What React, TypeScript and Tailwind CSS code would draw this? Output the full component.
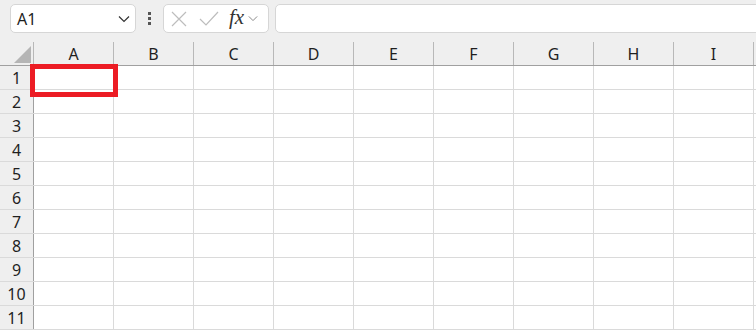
import React from 'react';

const columns = ['A', 'B', 'C', 'D', 'E', 'F', 'G', 'H', 'I'];
const rows = [1, 2, 3, 4, 5, 6, 7, 8, 9, 10, 11];

function Chevron({ className }: { className?: string }) {
  return (
    <svg viewBox="0 0 12 8" className={className} fill="none" stroke="currentColor" strokeWidth="1.2">
      <path d="M1 1.5 L6 6.5 L11 1.5" />
    </svg>
  );
}

export default function App() {
  return (
    <div
      className="w-[756px] h-[330px] overflow-hidden bg-[#efefef] text-[#1f1f1f]"
      style={{ fontFamily: '"Noto Sans", "Open Sans", sans-serif' }}
    >
      {/* formula bar row */}
      <div className="h-[42px] flex items-start pt-[4px]">
        <div className="ml-[10px] w-[126px] h-[29px] rounded-[5px] border border-[#d6d6d6] bg-white flex items-center justify-between pl-[6px] pr-[5px]">
          <span className="text-[16px] leading-none">A1</span>
          <Chevron className="w-[12px] h-[8px] text-[#333]" />
        </div>
        <div className="w-[27px] h-[29px] flex flex-col items-center justify-center gap-[2px]">
          <span className="w-[3px] h-[3px] bg-[#555]" />
          <span className="w-[3px] h-[3px] bg-[#555]" />
          <span className="w-[3px] h-[3px] bg-[#555]" />
        </div>
        <div className="w-[106px] h-[29px] rounded-[5px] border border-[#d6d6d6] bg-white flex items-center pl-[7px]">
          <svg viewBox="0 0 16 16" className="w-[16px] h-[16px] text-[#bdbdbd]" fill="none" stroke="currentColor" strokeWidth="1.2">
            <path d="M1 1 L15 15 M15 1 L1 15" />
          </svg>
          <svg viewBox="0 0 20 16" className="ml-[12px] w-[20px] h-[16px] text-[#bdbdbd]" fill="none" stroke="currentColor" strokeWidth="1.2">
            <path d="M1 8 L7 14 L19 1" />
          </svg>
          <span
            className="ml-[10px] text-[21px] leading-none italic font-medium text-[#333] -mt-[3px]"
            style={{ fontFamily: '"Liberation Serif", serif' }}
          >
            fx
          </span>
          <Chevron className="ml-[4px] w-[10px] h-[7px] text-[#8a8a8a]" />
        </div>
        <div className="ml-[6px] flex-1 -mr-[10px] h-[29px] rounded-[5px] border border-[#d6d6d6] bg-white" />
      </div>

      {/* sheet */}
      <div className="relative">
        <div className="flex h-[24px] border-b border-[#a0a0a0]">
          <div className="w-[34px] shrink-0 border-r border-[#b8b8b8] flex items-end justify-end pr-[2px] pb-[2px]">
            <svg viewBox="0 0 17 17" className="w-[17px] h-[17px]">
              <polygon points="17,0 17,17 0,17" fill="#b5b5b5" />
            </svg>
          </div>
          {columns.map((c) => (
            <div
              key={c}
              className="w-[80px] shrink-0 border-r border-[#b8b8b8] flex items-center justify-center text-[16px]"
            >
              {c}
            </div>
          ))}
          <div className="flex-1" />
        </div>

        {rows.map((r) => (
          <div key={r} className="flex h-[24px] border-b border-[#dadada]">
            <div className="w-[34px] shrink-0 border-r border-[#a0a0a0] bg-[#efefef] flex items-center justify-center text-[16px]">
              {r}
            </div>
            {columns.map((c) => (
              <div key={c} className="w-[80px] shrink-0 border-r border-[#dadada] bg-white" />
            ))}
            <div className="flex-1 bg-white" />
          </div>
        ))}

        {/* active cell */}
        <div className="absolute left-[30px] top-[22px] w-[88px] h-[33px] border-[5px] border-[#ec1c24]" />
      </div>
    </div>
  );
}
